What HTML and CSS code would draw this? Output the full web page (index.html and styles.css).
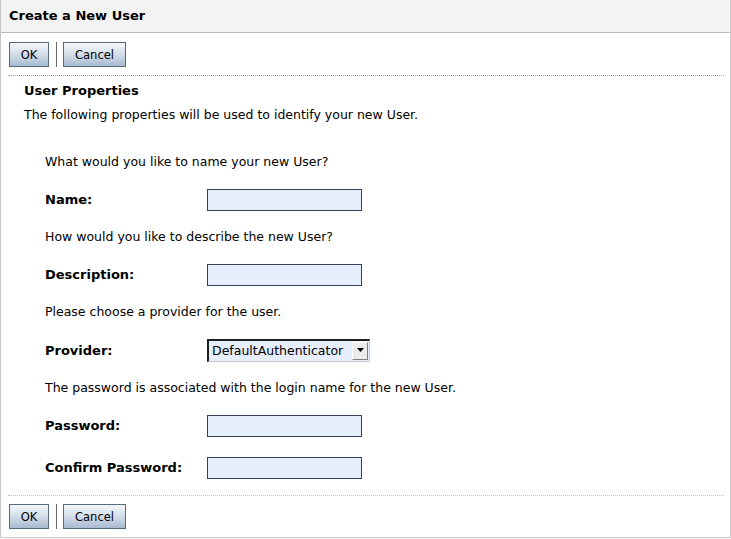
FILE: index.html
```html
<!DOCTYPE html>
<html>
<head>
<meta charset="utf-8">
<link rel="stylesheet" href="styles.css">
</head>
<body>
<div class="page">
  <div class="header">Create a New User</div>
  <div class="toolbar">
    <button class="btn btn-ok">OK</button>
    <span class="sep"></span>
    <button class="btn btn-cancel">Cancel</button>
  </div>
  <div class="section">
    <div class="section-title">User Properties</div>
    <div class="section-desc">The following properties will be used to identify your new User.</div>
    <div class="form">
      <div class="q">What would you like to name your new User?</div>
      <div class="field"><label class="lbl">Name:</label><input class="inp" type="text"></div>
      <div class="q">How would you like to describe the new User?</div>
      <div class="field"><label class="lbl">Description:</label><input class="inp" type="text"></div>
      <div class="q">Please choose a provider for the user.</div>
      <div class="field field-prov"><label class="lbl">Provider:</label>
        <div class="sel"><span class="sel-text">DefaultAuthenticator</span><span class="sel-btn"><svg width="9" height="5" viewBox="0 0 9 5"><path d="M1 0h7L4.5 4z" fill="#000"/></svg></span></div>
      </div>
      <div class="q">The password is associated with the login name for the new User.</div>
      <div class="field"><label class="lbl">Password:</label><input class="inp" type="password"></div>
      <div class="field field-last"><label class="lbl">Confirm Password:</label><input class="inp" type="password"></div>
    </div>
  </div>
  <div class="toolbar toolbar-bottom">
    <button class="btn btn-ok">OK</button>
    <span class="sep"></span>
    <button class="btn btn-cancel">Cancel</button>
  </div>
</div>
</body>
</html>
```
FILE: styles.css
```css
html, body {
  margin: 0;
  padding: 0;
  background: #fff;
}
body {
  font-family: "DejaVu Sans", Verdana, sans-serif;
  font-size: 12.5px;
  color: #000;
}
.page {
  width: 729px;
  height: 537px;
  border: 1px solid #c8c8c8;
  border-top: none;
  overflow: hidden;
}
.header {
  height: 32px;
  line-height: 32px;
  background: #f3f3f3;
  border-bottom: 1px solid #bdbdbd;
  padding-left: 8px;
  font-weight: bold;
  font-size: 13px;
}
.toolbar {
  display: flex;
  align-items: center;
  padding: 9px 0 0 8px;
  height: 25px;
}
.btn {
  font-family: "DejaVu Sans", Verdana, sans-serif;
  font-size: 11.5px;
  color: #000;
  height: 25px;
  padding: 0;
  border: 1px solid #56687e;
  background: linear-gradient(to bottom, #f4f7fa 0%, #d6e0ea 45%, #a9bad0 100%);
  border-radius: 0;
}
.btn-ok { width: 40px; }
.btn-cancel { width: 63px; }
.sep {
  width: 1px;
  height: 25px;
  background: #6b6b6b;
  margin: 0 6px 0 7px;
}
.section {
  margin: 8px 6px 0 7px;
  border-top: 1px dotted #9aa9ba;
  padding: 5px 0 0 16px;
  border-bottom: 1px dotted #b8c2cc;
}
.section-title {
  font-weight: bold;
  font-size: 13px;
  height: 20px;
  line-height: 20px;
}
.section-desc {
  height: 24px;
  line-height: 22px;
  padding-top: 3px;
}
.form {
  padding: 15px 0 0 21px;
}
.q {
  height: 38px;
  line-height: 38px;
}
.field {
  height: 37px;
  display: flex;
  align-items: center;
}
.field-prov { height: 38px; }
.field-last {
  height: 37px;
  margin-top: 5px;
  margin-bottom: 9px;
}
.lbl {
  font-weight: bold;
  font-size: 13px;
  width: 162px;
  flex: none;
}
.inp {
  width: 155px;
  height: 22px;
  box-sizing: border-box;
  border: 1px solid #33415a;
  background: #e6eefc;
  margin: 0;
  padding: 0 3px;
  font-family: inherit;
  font-size: 13px;
}
.sel {
  width: 163px;
  height: 23px;
  box-sizing: border-box;
  display: flex;
  align-items: stretch;
  border-top: 2px solid #1e1e1e;
  border-left: 2px solid #1e1e1e;
  border-right: 1px solid #c8c8c8;
  border-bottom: 1px solid #c8c8c8;
  background: #e6eefc;
}
.sel-text {
  flex: 1;
  padding-left: 3px;
  line-height: 19px;
  font-size: 12.5px;
}
.sel-btn {
  width: 16px;
  margin: 1px 1px 1px 0;
  background: #ececec;
  border-right: 1px solid #808080;
  border-bottom: 1px solid #808080;
  border-top: 1px solid #fff;
  border-left: 1px solid #fff;
  display: flex;
  align-items: center;
  justify-content: center;
  box-sizing: border-box;
}
.toolbar-bottom {
  padding-top: 8px;
}
```
